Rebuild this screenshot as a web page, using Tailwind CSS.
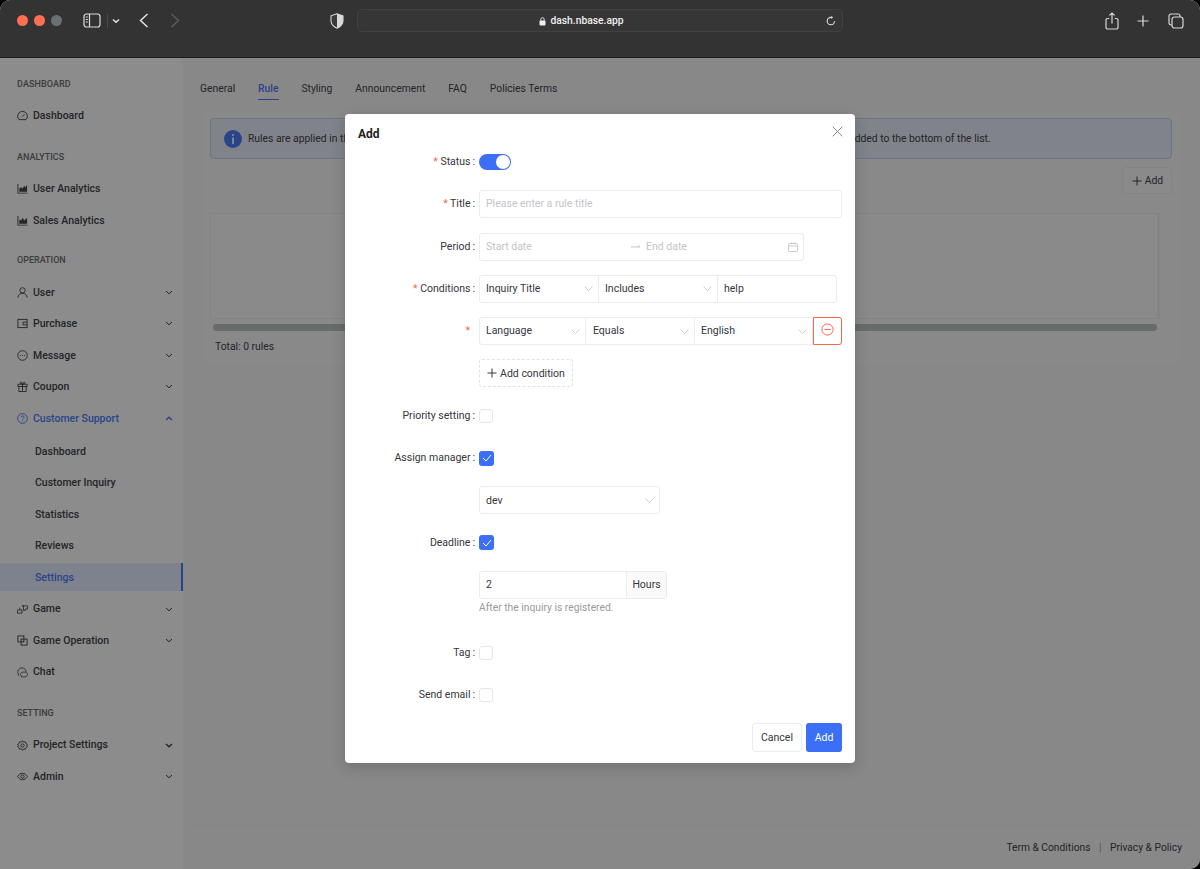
<!DOCTYPE html>
<html lang="en">
<head>
<meta charset="utf-8">
<title>Add rule</title>
<script src="https://cdn.jsdelivr.net/npm/@tailwindcss/browser@4"></script>
</head>
<body class="bg-black">
<div class="relative w-[1200px] h-[869px] overflow-hidden flex flex-col rounded-t-[10px] rounded-br-[10px] bg-[#f8f8f9] font-['Roboto',sans-serif] text-[10.5px] text-[#44444a]">

  <!-- Browser toolbar -->
  <header class="h-[58px] shrink-0 flex items-center pb-[16px] bg-[#333333] border-b border-[#1c1c1e] text-[#e8e8e8]">
    <span class="ml-[17px] w-[10.5px] h-[10.5px] rounded-full bg-[#ff6f52]"></span>
    <span class="ml-[6.5px] w-[10.5px] h-[10.5px] rounded-full bg-[#ff6f52]"></span>
    <span class="ml-[6.5px] w-[10.5px] h-[10.5px] rounded-full bg-[#6b7070]"></span>
    <svg class="ml-[21px]" width="18" height="15" viewBox="0 0 18 15" fill="none" stroke="#dcdcdc" stroke-width="1.2"><rect x="1" y="1" width="16" height="13" rx="2.5"/><path d="M6.5 1v13"/><path d="M2.8 4h2M2.8 6.5h2M2.8 9h2" stroke-width="1"/></svg>
    <span class="ml-[6px] w-px h-[14px] bg-[#4a4a4a]"></span>
    <svg class="ml-[4px]" width="8" height="6" viewBox="0 0 8 6" fill="none" stroke="#e8e8e8" stroke-width="1.4"><path d="M1 1.5l3 2.8 3-2.8"/></svg>
    <svg class="ml-[19px]" width="10" height="15" viewBox="0 0 10 15" fill="none" stroke="#e8e8e8" stroke-width="1.4"><path d="M8.5 1L1.5 7.5l7 6.5"/></svg>
    <svg class="ml-[21px]" width="10" height="15" viewBox="0 0 10 15" fill="none" stroke="#5c5c5c" stroke-width="1.4"><path d="M1.5 1l7 6.5-7 6.5"/></svg>
    <svg class="ml-[150px]" width="14" height="16" viewBox="0 0 14 16"><path d="M7 .8L1 2.8v5c0 3.6 2.6 6 6 7.4 3.4-1.4 6-3.8 6-7.4v-5z" fill="#3a3a3a" stroke="#d8d8d8" stroke-width="1.1"/><path d="M7 .8v14.4c3.4-1.4 6-3.8 6-7.4v-5z" fill="#d8d8d8"/></svg>
    <div class="ml-[13px] w-[486px] h-[23px] flex items-center justify-center relative rounded-[5px] bg-[#363636] border border-[#414141] pr-[36px] pt-[1px]">
      <svg class="mr-[4px]" width="7" height="9" viewBox="0 0 7 9"><rect x=".5" y="3.5" width="6" height="5" rx="1" fill="#eee"/><path d="M1.8 3.8V2.4a1.7 1.7 0 013.4 0v1.4" fill="none" stroke="#eee" stroke-width=".9"/></svg>
      <span class="text-[#f0f0f0] text-[10.3px] font-medium">dash.nbase.app</span>
      <svg class="absolute right-[6px] top-[6px]" width="10" height="10" viewBox="0 0 10 10" fill="none" stroke="#dcdcdc" stroke-width="1.1"><path d="M8.6 5.2A3.7 3.7 0 115 1.4h1.5"/><path d="M5.2 0l1.7 1.4L5.2 2.9" fill="#dcdcdc" stroke="none"/></svg>
    </div>
    <svg class="ml-[262px]" width="14" height="18" viewBox="0 0 14 18" fill="none" stroke="#d8d8d8" stroke-width="1.2"><path d="M4.2 6.5H2.6A1.6 1.6 0 001 8.1v7.3A1.6 1.6 0 002.6 17h8.8a1.6 1.6 0 001.6-1.6V8.1a1.6 1.6 0 00-1.6-1.6H9.8"/><path d="M7 11.5V1M4.4 3.4L7 1l2.6 2.4"/></svg>
    <svg class="ml-[18px]" width="12" height="12" viewBox="0 0 12 12" fill="none" stroke="#dcdcdc" stroke-width="1.2"><path d="M6 .5v11M.5 6h11"/></svg>
    <svg class="ml-[19px]" width="16" height="16" viewBox="0 0 16 16" fill="none" stroke="#d8d8d8" stroke-width="1.2"><rect x="4" y="4" width="11" height="11" rx="2.5"/><path d="M4 12H3a2 2 0 01-2-2V3a2 2 0 012-2h7a2 2 0 012 2v1"/></svg>
  </header>

  <div class="flex flex-1 min-h-0">
    <!-- Sidebar -->
    <aside class="w-[183px] shrink-0 bg-white pt-[10.7px] font-medium text-[#44444a]">
      <div class="h-[31.5px] flex items-center pl-[17px] text-[9px] text-[#6e6e73] tracking-[0.1px]">DASHBOARD</div>
      <div class="h-[31.5px] flex items-center pl-[17px] gap-[5px]"><svg class="w-[11px] h-[11px]" viewBox="0 0 12 12" fill="none" stroke="currentColor" stroke-width="1"><path d="M2.2 10.5a5.3 5.3 0 117.6 0z"/><path d="M6 7l2.2-2.2" /></svg>Dashboard</div>

      <div class="mt-[10px] h-[31.5px] flex items-center pl-[17px] text-[9px] text-[#6e6e73]">ANALYTICS</div>
      <div class="h-[31.5px] flex items-center pl-[17px] gap-[5px]"><svg class="w-[11px] h-[11px]" viewBox="0 0 12 12" fill="currentColor"><path d="M.5 1h1v9.5H11.5v1H.5z"/><path d="M2.5 9.5V6l2-1.5L6 6l2-3 1 2 2-3v7.5z"/></svg>User Analytics</div>
      <div class="h-[31.5px] flex items-center pl-[17px] gap-[5px]"><svg class="w-[11px] h-[11px]" viewBox="0 0 12 12" fill="currentColor"><path d="M.5 1h1v9.5H11.5v1H.5z"/><path d="M2.5 9.5V5l2 1 1.5-3 2 3 3-3v6.5z"/></svg>Sales Analytics</div>

      <div class="mt-[9px] h-[31.5px] flex items-center pl-[17px] text-[9px] text-[#6e6e73]">OPERATION</div>
      <div class="h-[31.5px] flex items-center pl-[17px] pr-[10px] gap-[5px]"><svg class="w-[11px] h-[11px]" viewBox="0 0 12 12" fill="none" stroke="currentColor"><circle cx="6" cy="3.7" r="2.9"/><path d="M1 11.5c.2-2.8 2.2-4.6 5-4.6s4.8 1.8 5 4.6"/></svg><span class="flex-1">User</span><svg width="8" height="5" viewBox="0 0 8 5" fill="none" stroke="currentColor"><path d="M1 1l3 2.8L7 1"/></svg></div>
      <div class="h-[31.5px] flex items-center pl-[17px] pr-[10px] gap-[5px]"><svg class="w-[11px] h-[11px]" viewBox="0 0 12 12" fill="none" stroke="currentColor"><rect x="1" y="1.5" width="10" height="9"/><path d="M11 4.5H6.5v3H11"/></svg><span class="flex-1">Purchase</span><svg width="8" height="5" viewBox="0 0 8 5" fill="none" stroke="currentColor"><path d="M1 1l3 2.8L7 1"/></svg></div>
      <div class="h-[31.5px] flex items-center pl-[17px] pr-[10px] gap-[5px]"><svg class="w-[11px] h-[11px]" viewBox="0 0 12 12" fill="none" stroke="currentColor"><circle cx="6" cy="6" r="5.2"/><path d="M3.2 6h1M5.5 6h1M7.8 6h1" stroke-width="1"/></svg><span class="flex-1">Message</span><svg width="8" height="5" viewBox="0 0 8 5" fill="none" stroke="currentColor"><path d="M1 1l3 2.8L7 1"/></svg></div>
      <div class="h-[31.5px] flex items-center pl-[17px] pr-[10px] gap-[5px]"><svg class="w-[11px] h-[11px]" viewBox="0 0 12 12" fill="none" stroke="currentColor"><path d="M1 3.5h10v2.5H1zM2 6v5.5h8V6M6 3.5v8M6 3.5C4.5 3.5 3.5 2.8 3.5 1.8S5.2.6 6 3.5c.8-2.9 2.5-2.7 2.5-1.7S7.5 3.5 6 3.5z"/></svg><span class="flex-1">Coupon</span><svg width="8" height="5" viewBox="0 0 8 5" fill="none" stroke="currentColor"><path d="M1 1l3 2.8L7 1"/></svg></div>
      <div class="h-[31.5px] flex items-center pl-[17px] pr-[10px] gap-[5px] text-[#4d7cfe]"><svg class="w-[11px] h-[11px]" viewBox="0 0 12 12" fill="none" stroke="currentColor"><circle cx="6" cy="6" r="5.3"/><path d="M4.4 4.6c0-2.1 3.3-2.1 3.3 0 0 1.4-1.7 1.3-1.7 2.7M6 8.4v1"/></svg><span class="flex-1">Customer Support</span><svg width="8" height="5" viewBox="0 0 8 5" fill="none" stroke="currentColor" stroke-width="1.4"><path d="M1 4l3-2.8L7 4"/></svg></div>
      <div class="mt-[1.5px] h-[31.5px] flex items-center pl-[35px]">Dashboard</div>
      <div class="h-[31.5px] flex items-center pl-[35px]">Customer Inquiry</div>
      <div class="h-[31.5px] flex items-center pl-[35px]">Statistics</div>
      <div class="h-[31.5px] flex items-center pl-[35px]">Reviews</div>
      <div class="h-[28px] my-[1.75px] flex items-center pl-[35px] bg-[#e6edff] text-[#4d7cfe] border-r-2 border-[#4d7cfe]">Settings</div>
      <div class="mt-[2px] h-[31.5px] flex items-center pl-[17px] pr-[10px] gap-[5px]"><svg class="w-[11px] h-[11px]" viewBox="0 0 12 12" fill="none" stroke="currentColor" stroke-width=".9"><path d="M.5 6.5h5v3.5h-5zM3 6.5V4M5.5 2h6v3.5H9V7H7V2z"/></svg><span class="flex-1">Game</span><svg width="8" height="5" viewBox="0 0 8 5" fill="none" stroke="currentColor"><path d="M1 1l3 2.8L7 1"/></svg></div>
      <div class="h-[31.5px] flex items-center pl-[17px] pr-[10px] gap-[5px]"><svg class="w-[11px] h-[11px]" viewBox="0 0 12 12" fill="none" stroke="currentColor"><rect x="1" y="1" width="6.5" height="6.5"/><rect x="4.5" y="4.5" width="6.5" height="6.5"/></svg><span class="flex-1">Game Operation</span><svg width="8" height="5" viewBox="0 0 8 5" fill="none" stroke="currentColor"><path d="M1 1l3 2.8L7 1"/></svg></div>
      <div class="h-[31.5px] flex items-center pl-[17px] gap-[5px]"><svg class="w-[11px] h-[11px]" viewBox="0 0 12 12" fill="none" stroke="currentColor" stroke-width=".9"><path d="M1.4 7.6C-.2 4.2 2 1 5.2 1s4.8 2.2 4.6 4.4"/><path d="M2 9.6l-.6-2M3.8 8.2c0-1.6 1.4-2.7 3.8-2.7s3.9 1.1 3.9 2.7-1.4 2.6-3.9 2.6h-3l.3-1z"/></svg>Chat</div>

      <div class="mt-[10px] h-[31.5px] flex items-center pl-[17px] text-[9px] text-[#6e6e73]">SETTING</div>
      <div class="h-[31.5px] flex items-center pl-[17px] pr-[10px] gap-[5px]"><svg class="w-[11px] h-[11px]" viewBox="0 0 12 12" fill="none" stroke="currentColor"><path d="M6 .7l1.2 1.6 2-.3.6 1.9 1.7 1.1L10.6 6l.9 1-1.7 1.1-.6 1.9-2-.3L6 11.3 4.8 9.7l-2 .3-.6-1.9L.5 7l.9-1-.9-1 1.7-1.1.6-1.9 2 .3z"/><circle cx="6" cy="6" r="1.8"/></svg><span class="flex-1">Project Settings</span><svg width="8" height="5" viewBox="0 0 8 5" fill="none" stroke="currentColor" stroke-width="1.4"><path d="M1 1l3 2.8L7 1"/></svg></div>
      <div class="h-[31.5px] flex items-center pl-[17px] pr-[10px] gap-[5px]"><svg class="w-[11px] h-[11px]" viewBox="0 0 12 12" fill="none" stroke="currentColor"><path d="M.6 6C2 3.6 3.8 2.5 6 2.5S10 3.6 11.4 6C10 8.4 8.2 9.5 6 9.5S2 8.4.6 6z"/><circle cx="6" cy="6" r="1.8"/></svg><span class="flex-1">Admin</span><svg width="8" height="5" viewBox="0 0 8 5" fill="none" stroke="currentColor"><path d="M1 1l3 2.8L7 1"/></svg></div>
    </aside>

    <!-- Main -->
    <main class="flex-1 min-w-0 flex flex-col text-[10.35px]">
      <nav class="h-[52px] shrink-0 flex pl-[17px] pt-[23px] gap-[22.9px]">
        <span class="h-[19px]">General</span>
        <span class="h-[19px] text-[#4d7cfe] font-medium border-b border-[#4d7cfe]">Rule</span>
        <span class="h-[19px]">Styling</span>
        <span class="h-[19px]">Announcement</span>
        <span class="h-[19px]">FAQ</span>
        <span class="h-[19px]">Policies Terms</span>
      </nav>
      <section class="ml-[20px] mr-[20px] h-[255px] px-[7px] pt-[8px] bg-[#fafafb] flex flex-col">
        <div class="h-[41px] w-[962px] shrink-0 rounded-[4px] bg-[#e9eefa] border border-[#c7d5f3] flex items-center pl-[13px] gap-[6px]">
          <svg width="18" height="18" viewBox="0 0 18 18"><circle cx="9" cy="9" r="9" fill="#4d7cfe"/><circle cx="9" cy="5" r="1.1" fill="#fff"/><rect x="8.1" y="7.5" width="1.8" height="6.5" fill="#fff"/></svg>
          <span>Rules are applied in the order they are listed, and only the first matching rule is applied to each incoming user inquiry. New rules are added to the bottom of the list.</span>
        </div>
        <div class="w-[962px] flex justify-end mt-[8px]">
          <div class="w-[49px] h-[27px] rounded-[3px] bg-[#fbfbfc] border border-[#f0f0f2] flex items-center justify-center gap-[3px]">
            <svg width="10" height="10" viewBox="0 0 10 10" fill="none" stroke="currentColor"><path d="M5 .5v9M.5 5h9"/></svg>Add
          </div>
        </div>
        <div class="w-[950px] h-[106px] mt-[19px] bg-[#fbfbfc] border border-[#f0f0f2] border-r-[3px] shrink-0"></div>
        <div class="ml-[3px] w-[944px] h-[7px] mt-[5px] rounded-full bg-[#bcc3c3]"></div>
        <div class="ml-[5px] mt-[8px]">Total: 0 rules</div>
      </section>
      <footer class="mt-auto mb-[14px] ml-[7px] mr-[10px] h-[30px] border-t border-[#f0f0f2] flex items-end justify-end pr-[8px] gap-[8.5px] text-[10.25px]">
        <span>Term &amp; Conditions</span><span class="text-[#9a9a9e]">|</span><span>Privacy &amp; Policy</span>
      </footer>
    </main>
  </div>

  <!-- Dim layer -->
  <div class="absolute left-0 right-0 top-[58px] bottom-0 bg-black/45"></div>

  <!-- Modal -->
  <div class="absolute left-[345px] top-[114px] w-[510px] h-[649px] rounded-[4px] bg-white shadow-[0_4px_14px_rgba(0,0,0,0.18)] flex flex-col px-[13px] text-[#36363c]">
    <div class="h-[34px] shrink-0 flex items-start justify-between pt-[13px]">
      <span class="text-[12px] leading-[14px] font-bold text-[#222]">Add</span>
      <svg class="mt-[-1px] mr-[-1px]" width="11" height="11" viewBox="0 0 11 11" fill="none" stroke="#8a8a8e"><path d="M.7.7l9.6 9.6M10.3.7L.7 10.3"/></svg>
    </div>

    <div class="flex flex-col gap-[14.3px]">
      <div class="h-7 flex items-center gap-[4px]">
        <label class="w-[117px] text-right"><span class="text-[#f5684a]">*</span> Status<span class="ml-[2px]">:</span></label>
        <span class="w-[32px] h-[16px] rounded-full bg-[#3b6ff5] flex items-center justify-end pr-[1px]"><span class="w-[14px] h-[14px] rounded-full bg-white"></span></span>
      </div>
      <div class="h-7 flex items-center gap-[4px]">
        <label class="w-[117px] text-right"><span class="text-[#f5684a]">*</span> Title<span class="ml-[2px]">:</span></label>
        <div class="flex-1 h-7 rounded-[3px] border border-[#ececf0] flex items-center pl-[6px] text-[#c4c4c8]">Please enter a rule title</div>
      </div>
      <div class="h-7 flex items-center gap-[4px]">
        <label class="w-[117px] text-right">Period<span class="ml-[2px]">:</span></label>
        <div class="w-[325px] h-7 rounded-[3px] border border-[#ececf0] flex items-center pl-[6px] pr-[5px] text-[#c4c4c8]">
          <span class="w-[145px]">Start date</span>
          <svg width="10" height="6" viewBox="0 0 10 6" fill="none" stroke="#b8b8bc" stroke-width=".8"><path d="M0 3h9M7 1l2 2"/></svg>
          <span class="ml-[5px] flex-1">End date</span>
          <svg width="10" height="10" viewBox="0 0 10 10" fill="none" stroke="#c4c4c8" stroke-width=".9"><rect x=".5" y="1.5" width="9" height="8" rx="1"/><path d="M.5 4h9M3 .3v2M7 .3v2"/></svg>
        </div>
      </div>
      <div class="h-7 flex items-center gap-[4px]">
        <label class="w-[117px] text-right"><span class="text-[#f5684a]">*</span> Conditions<span class="ml-[2px]">:</span></label>
        <div class="w-[358px] h-7 flex rounded-[3px] border border-[#ececf0]">
          <div class="w-[119px] border-r border-[#ececf0] flex items-center justify-between pl-[6px] pr-[5px]">Inquiry Title<svg width="9" height="5" viewBox="0 0 9 5" fill="none" stroke="#c4c4c8" stroke-width=".8"><path d="M.5.5l4 4 4-4"/></svg></div>
          <div class="w-[119px] border-r border-[#ececf0] flex items-center justify-between pl-[6px] pr-[5px]">Includes<svg width="9" height="5" viewBox="0 0 9 5" fill="none" stroke="#c4c4c8" stroke-width=".8"><path d="M.5.5l4 4 4-4"/></svg></div>
          <div class="flex-1 flex items-center pl-[6px]">help</div>
        </div>
      </div>
      <div class="h-7 flex items-center gap-[4px]">
        <label class="w-[117px] text-right pr-[5px]"><span class="text-[#f5684a]">*</span></label>
        <div class="w-[363px] h-7 flex">
          <div class="w-[107px] border border-[#ececf0] rounded-l-[3px] flex items-center justify-between pl-[6px] pr-[5px]">Language<svg width="9" height="5" viewBox="0 0 9 5" fill="none" stroke="#c4c4c8" stroke-width=".8"><path d="M.5.5l4 4 4-4"/></svg></div>
          <div class="w-[109px] border-y border-r border-[#ececf0] flex items-center justify-between pl-[7px] pr-[5px]">Equals<svg width="9" height="5" viewBox="0 0 9 5" fill="none" stroke="#c4c4c8" stroke-width=".8"><path d="M.5.5l4 4 4-4"/></svg></div>
          <div class="w-[118px] border-y border-r border-[#ececf0] flex items-center justify-between pl-[6px] pr-[5px]">English<svg width="9" height="5" viewBox="0 0 9 5" fill="none" stroke="#c4c4c8" stroke-width=".8"><path d="M.5.5l4 4 4-4"/></svg></div>
          <div class="flex-1 border-[1.5px] border-[#f5684a] rounded-r-[3px] flex items-center justify-center pb-[3px]">
            <svg width="13" height="13" viewBox="0 0 13 13" fill="none" stroke="#f5684a"><circle cx="6.5" cy="6.5" r="5.6"/><path d="M3.5 6.5h6"/></svg>
          </div>
        </div>
      </div>
      <div class="h-7 flex items-center gap-[4px]">
        <span class="w-[117px]"></span>
        <div class="w-[94px] h-7 rounded-[3px] border border-dashed border-[#e2e2e6] flex items-center justify-center gap-[3px]">
          <svg width="10" height="10" viewBox="0 0 10 10" fill="none" stroke="currentColor"><path d="M5 .5v9M.5 5h9"/></svg>Add condition
        </div>
      </div>
      <div class="h-7 flex items-center gap-[4px]">
        <label class="w-[117px] text-right">Priority setting<span class="ml-[2px]">:</span></label>
        <span class="w-[14px] h-[14px] rounded-[3px] border border-[#e6e6ea]"></span>
      </div>
      <div class="h-7 flex items-center gap-[4px]">
        <label class="w-[117px] text-right">Assign manager<span class="ml-[2px]">:</span></label>
        <span class="w-[15px] h-[15px] rounded-[3px] bg-[#3b6ff5] flex items-center justify-center"><svg width="10" height="8" viewBox="0 0 10 8" fill="none" stroke="#fff"><path d="M1 4l3 3 5-6"/></svg></span>
      </div>
      <div class="h-7 flex items-center gap-[4px]">
        <span class="w-[117px]"></span>
        <div class="w-[181px] h-7 rounded-[3px] border border-[#ececf0] flex items-center justify-between pl-[6px] pr-[5px]">dev<svg width="9" height="5" viewBox="0 0 9 5" fill="none" stroke="#c4c4c8" stroke-width=".8"><path d="M.5.5l4 4 4-4"/></svg></div>
      </div>
      <div class="h-7 flex items-center gap-[4px]">
        <label class="w-[117px] text-right">Deadline<span class="ml-[2px]">:</span></label>
        <span class="w-[15px] h-[15px] rounded-[3px] bg-[#3b6ff5] flex items-center justify-center"><svg width="10" height="8" viewBox="0 0 10 8" fill="none" stroke="#fff"><path d="M1 4l3 3 5-6"/></svg></span>
      </div>
      <div class="h-[53.8px] flex items-start gap-[4px]">
        <span class="w-[117px]"></span>
        <div>
          <div class="w-[188px] h-7 flex rounded-[3px] border border-[#ececf0]">
            <div class="w-[147px] border-r border-[#ececf0] flex items-center pl-[6px]">2</div>
            <div class="flex-1 bg-[#fafafa] flex items-center justify-center">Hours</div>
          </div>
          <p class="mt-[1px] text-[10.3px] text-[#9a9a9e]">After the inquiry is registered.</p>
        </div>
      </div>
      <div class="h-7 flex items-center gap-[4px]">
        <label class="w-[117px] text-right">Tag<span class="ml-[2px]">:</span></label>
        <span class="w-[14px] h-[14px] rounded-[3px] border border-[#e6e6ea]"></span>
      </div>
      <div class="h-7 flex items-center gap-[4px]">
        <label class="w-[117px] text-right">Send email<span class="ml-[2px]">:</span></label>
        <span class="w-[14px] h-[14px] rounded-[3px] border border-[#e6e6ea]"></span>
      </div>
    </div>

    <div class="mt-[14px] flex justify-end gap-[4px]">
      <span class="w-[50px] h-[29px] rounded-[3px] border border-[#ececf0] flex items-center justify-center">Cancel</span>
      <span class="w-[36px] h-[29px] rounded-[3px] bg-[#3b6ff5] text-white flex items-center justify-center">Add</span>
    </div>
  </div>
</div>
</body>
</html>
